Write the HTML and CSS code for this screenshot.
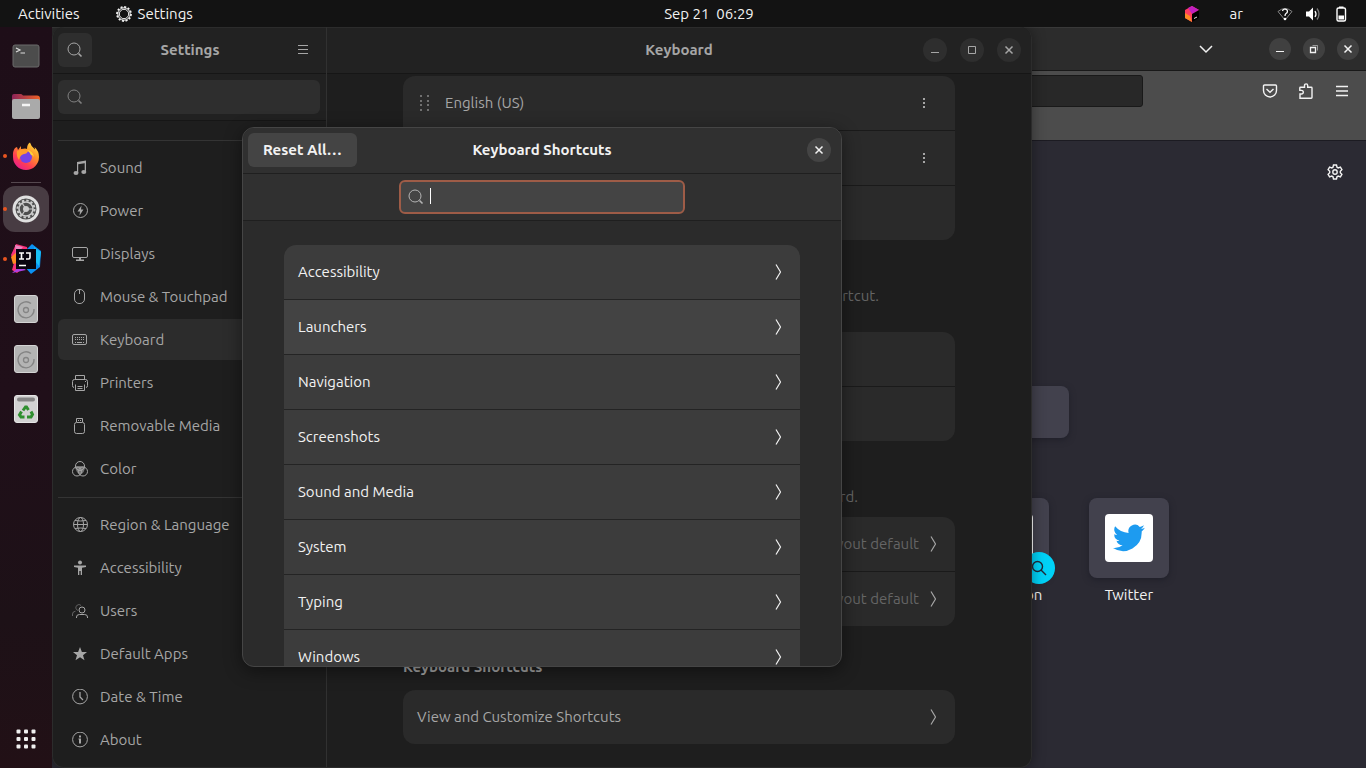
FILE: index.html
```html
<!DOCTYPE html>
<html lang="en">
<head>
<meta charset="utf-8">
<title>Keyboard Shortcuts</title>
<link rel="stylesheet" href="styles.css">
</head>
<body>
<svg class="sprite" aria-hidden="true">
  <symbol id="search" viewBox="0 0 16 16"><g fill="none" stroke="currentColor"><circle cx="7" cy="7" r="6"/><path d="M11.5 11.5l3 3" stroke-width="1.6"/></g></symbol>
  <symbol id="menu" viewBox="0 0 16 16"><path d="M3 3.5h10M3 7.5h10M3 11.5h10" stroke="currentColor" fill="none"/></symbol>
  <symbol id="min" viewBox="0 0 16 16"><path d="M4 10.5h8" stroke="currentColor" fill="none"/></symbol>
  <symbol id="max" viewBox="0 0 16 16"><path d="M4.500 4.500h7v7h-7z" stroke="currentColor" fill="none"/></symbol>
  <symbol id="restore" viewBox="0 0 16 16"><path d="M4.500 6.500h5v5h-5z" stroke="currentColor" fill="none" stroke-width="1.300"/><path d="M6.500 4.500h5v5" stroke="currentColor" opacity=".5" fill="none"/></symbol>
  <symbol id="close" viewBox="0 0 16 16"><path d="M4.500 4.500l7 7M11.500 4.500l-7 7" stroke="currentColor" stroke-width="1.500" fill="none"/></symbol>
  <symbol id="next" viewBox="0 0 16 16"><path d="M6 .5L10.500 8 6 15.500" stroke="currentColor" stroke-width="1.200" fill="none"/></symbol>
  <symbol id="more" viewBox="0 0 16 16"><path d="M7 3h2v2H7zM7 7h2v2H7zM7 11h2v2H7z" fill="currentColor"/></symbol>
  <symbol id="drive" viewBox="0 0 24 28"><rect x=".5" y=".5" width="23" height="27" rx="2.500" fill="#b4b4b4" stroke="#d4d4d4"/><path d="M17 8.500a8 8 0 1 0 3 5.500" fill="none" stroke="#858585" stroke-width="1.300"/><circle cx="12" cy="15" r="2.500" fill="none" stroke="#858585" stroke-width="1.300"/></symbol>
</svg>

<header class="topbar">
  <div class="topbar-left">
    <button class="plain">Activities</button>
    <button class="plain app-menu"><svg class="icon" viewBox="0 0 16 16"><circle cx="8" cy="8" r="7" fill="none" stroke="currentColor" stroke-width="1.800" stroke-dasharray="2 1.660"/><circle cx="8" cy="8" r="6.200" fill="none" stroke="currentColor"/><circle cx="8" cy="8" r="4.700" fill="none" stroke="currentColor"/></svg>Settings</button>
  </div>
  <time class="clock">Sep 21&nbsp; 06:29</time>
  <div class="topbar-right">
    <svg class="icon toolbox" viewBox="0 0 16 16"><path d="M8 0l7 4v3L8 16 1 12V4z" fill="#ff3c61"/><path d="M8 0l7 4-7 4-4-6z" fill="#c21fc0"/><path d="M1 7l5 3 2 6-7-4z" fill="#ff8a24"/><path d="M8 8l7-4v8l-7 4z" fill="#000"/><path d="M10 12.500l3-1.500" stroke="#ddd"/></svg>
    <button class="plain lang">ar</button>
    <button class="plain status">
      <svg class="icon" viewBox="0 0 16 16"><path d="M8 14L1 5.500Q8-.5 15 5.500z" fill="none" stroke="#888"/><path d="M5.500 5a2.500 2.300 0 1 1 3.500 2.500q-1 .7-1 2.500" fill="none" stroke="#fff" stroke-width="1.300"/><circle cx="8" cy="13" r="1.300" fill="#fff"/></svg>
      <svg class="icon" viewBox="0 0 16 16"><path d="M1 5.500h3L8 1.500v13l-4-4H1z" fill="#fff"/><path d="M10 5q2 3 0 6" fill="none" stroke="#fff" stroke-width="1.300"/><path d="M12 2.500q4 5.500 0 11" fill="none" stroke="#777" stroke-width="1.300"/></svg>
      <svg class="icon" viewBox="0 0 16 16"><rect x="4" y="2" width="8.500" height="13" rx="1.500" fill="none" stroke="#fff" stroke-width="1.400"/><path d="M6 .5h4.500V2H6zM5.500 9.500H11v4H5.500z" fill="#fff"/></svg>
    </button>
  </div>
</header>

<div class="desktop">
  <nav class="dock" aria-label="Dock">
    <button class="launcher" aria-label="Terminal"><svg width="28" height="24" viewBox="0 0 28 24"><rect x="1" y="1" width="26" height="22" rx="2" fill="#4c4c4c" stroke="#6b6b6b"/><path d="M4 4l4 2-4 2" fill="none" stroke="#ddd" stroke-width="1.200"/><path d="M8.500 9h4.500" stroke="#ddd"/></svg></button>
    <button class="launcher" aria-label="Files"><svg width="30" height="28" viewBox="0 0 30 28"><defs><linearGradient id="folder"><stop stop-color="#8d2459"/><stop offset="1" stop-color="#ee6126"/></linearGradient></defs><path d="M1 8V4q0-2 2-2h7q1 0 2 1.500h14q3 0 3 3V12H1z" fill="url(#folder)"/><rect x="1" y="7" width="28" height="20" rx="2" fill="#aaa"/><path d="M11 13h8" stroke="#f4f4f4" stroke-width="2.500"/></svg></button>
    <button class="launcher running" aria-label="Firefox"><svg width="28" height="28" viewBox="0 0 28 28"><defs><linearGradient id="fox" x1="1" y1="0" x2="0.300" y2="1"><stop stop-color="#fff04c"/><stop offset=".4" stop-color="#ff9a28"/><stop offset=".75" stop-color="#ff3f52"/><stop offset="1" stop-color="#e8208a"/></linearGradient></defs><path d="M18 .5q1 4 5 7 0-1.500-.500-2.500Q27 9 27 15A13 13 0 0 1 1 15Q.5 9 3 6l2-1 1 3 3-4v3q5-1 6 0 0-5 3-6.500z" fill="url(#fox)"/><circle cx="14" cy="15" r="6" fill="#7542e5"/><path d="M5 9q5-3 11 0-1 3-4 3-4 1-5 6-3-4-2-9z" fill="#ff9b2c"/><path d="M15 8q6 1 7 7-1-2-3-2-1-3-4-5z" fill="#ffd13a"/></svg></button>
    <hr class="dock-line">
    <button class="launcher running active" aria-label="Settings"><svg width="28" height="28" viewBox="0 0 28 28"><circle cx="14" cy="14" r="13.500" fill="#e0e0e0"/><circle cx="14" cy="14" r="10.500" fill="#4e4e4e"/><circle cx="14" cy="14" r="8.500" fill="none" stroke="#ccc" stroke-width="2" stroke-dasharray="2.400 2.050"/><circle cx="14" cy="14" r="7" fill="none" stroke="#ccc" stroke-width="1.600"/><circle cx="14" cy="14" r="3" fill="#ccc"/><path d="M14 14L10 8M14 14h7M14 14l-4 6" stroke="#ccc" stroke-width="1.200"/></svg></button>
    <button class="launcher running" aria-label="IntelliJ IDEA"><svg width="30" height="30" viewBox="0 0 30 30"><path d="M0 11l5-11 11 3 3 15-13 11-5-3 2-7z" fill="#f83179"/><path d="M0 13l7-6 3 11-8 2z" fill="#ff8b22"/><path d="M4 1l8 2-7 8z" fill="#e887c0"/><path d="M16 5l5-5 9 7-1 16-9 7-6-7z" fill="#0a91f3"/><path d="M23 3l7 5-2 14-4-5z" fill="#18bff5"/><path d="M1 29l8-7 6 4z" fill="#ad3fe0"/><path d="M5 5h20v20H5z" fill="#080510"/><path d="M8 9h5M10.500 9v6M8 15h5M15 9h4v4.500q0 1.500-1.500 1.500H15M8 21.500h7" fill="none" stroke="#fff" stroke-width="1.600"/></svg></button>
    <button class="launcher" aria-label="Volume 1"><svg width="24" height="28"><use href="#drive"/></svg></button>
    <button class="launcher" aria-label="Volume 2"><svg width="24" height="28"><use href="#drive"/></svg></button>
    <button class="launcher" aria-label="Trash"><svg width="24" height="28" viewBox="0 0 24 28"><rect x=".5" y=".5" width="23" height="27" rx="2.500" fill="#d2d2d2" stroke="#e6e6e6"/><rect x="3" y="2.500" width="18" height="4" rx="2" fill="#858585"/><g fill="none" stroke="#2f8f2f" stroke-width="3"><path d="M9 15.500l2.500-3.500h1l2 3"/><path d="M17 16.500l1.500 3-1.500 2.500h-4"/><path d="M10.500 22H7l-1.500-2 2-3.500"/></g></svg></button>
    <button class="launcher apps" aria-label="Show Applications"><svg width="20" height="20" viewBox="0 0 20 20" fill="#f0f0f0"><rect x=".5" y=".5" width="4" height="4" rx="1"/><rect x="8" y=".5" width="4" height="4" rx="1"/><rect x="15.500" y=".5" width="4" height="4" rx="1"/><rect x=".5" y="8" width="4" height="4" rx="1"/><rect x="8" y="8" width="4" height="4" rx="1"/><rect x="15.500" y="8" width="4" height="4" rx="1"/><rect x=".5" y="15.500" width="4" height="4" rx="1"/><rect x="8" y="15.500" width="4" height="4" rx="1"/><rect x="15.500" y="15.500" width="4" height="4" rx="1"/></svg></button>
  </nav>

  <main class="workspace">
    <section class="browser" aria-label="Browser">
      <div class="tabbar">
        <button class="plain tabs-menu" aria-label="List all tabs"><svg class="icon" viewBox="0 0 16 16"><path d="M2 5l6 6 6-6" fill="none" stroke="currentColor" stroke-width="1.500"/></svg></button>
        <div class="window-buttons">
          <button class="round" aria-label="Minimize"><svg class="icon"><use href="#min"/></svg></button>
          <button class="round" aria-label="Restore"><svg class="icon"><use href="#restore"/></svg></button>
          <button class="round" aria-label="Close"><svg class="icon"><use href="#close"/></svg></button>
        </div>
      </div>
      <div class="toolbar">
        <input class="address" type="text" aria-label="Address">
        <div class="toolbar-actions">
          <button class="plain" aria-label="Save to Pocket"><svg class="icon" viewBox="0 0 16 16"><g fill="none" stroke="currentColor" stroke-width="1.400"><path d="M2.500 2h11q1 0 1 1v4.500a6.500 6.500 0 0 1-13 0V3q0-1 1-1z"/><path d="M4.500 6L8 9.300 11.500 6"/></g></svg></button>
          <button class="plain" aria-label="Extensions"><svg class="icon" viewBox="0 0 16 16"><path d="M2 15.200V11h1.500a1.800 1.800 0 0 0 0-3.600H1.800V5q0-.7.700-.7h4V2.500a1.600 1.600 0 0 1 3.200 0v1.800h3.500q.8 0 .8.700v9.500q0 .7-.8.700z" fill="none" stroke="currentColor" stroke-width="1.400"/></svg></button>
          <button class="plain" aria-label="Open menu"><svg class="icon" viewBox="0 0 16 16"><path d="M2 3.500h12M2 8h12M2 12.500h12" stroke="currentColor" stroke-width="1.300"/></svg></button>
        </div>
      </div>
      <div class="newtab">
        <button class="plain personalize" aria-label="Personalize new tab"><svg class="icon" viewBox="0 0 16 16"><g fill="none" stroke="currentColor" stroke-width="1.400"><path d="M6.500 1h3l.5 2.200 1.200.7 2.200-.8 1.500 2.600-1.600 1.600v1.400l1.600 1.600-1.500 2.600-2.200-.8-1.200.7-.5 2.200h-3L6 12.800l-1.200-.7-2.200.8-1.500-2.600 1.600-1.600V7.300L1.100 5.700l1.500-2.600 2.200.8L6 3.200z"/><circle cx="8" cy="8" r="2.200"/></g></svg></button>
        <input class="web-search" type="text" aria-label="Search the web">
        <div class="tiles">
          <a class="tile" href="#"><span class="tile-box"><span class="tile-logo"></span><span class="tile-badge"><svg class="icon" viewBox="0 0 16 16"><g fill="none" stroke="currentColor" stroke-width="1.400"><circle cx="6.500" cy="6.500" r="5"/><path d="M10 10l5 5"/></g></svg></span></span>@amazon</a>
          <a class="tile" href="#"><span class="tile-box"><span class="tile-logo"><svg width="32" height="28" viewBox="0 0 24 20"><path d="M23.900 2.400q-1.300.6-2.800.8 1.500-1 2.100-2.700-1.400.8-3.100 1.200A4.900 4.900 0 0 0 11.700 6.200Q5.500 5.900 1.600 1.200a4.900 4.900 0 0 0 1.500 6.500q-1.200 0-2.200-.6a4.900 4.900 0 0 0 3.900 4.900q-1.100.3-2.200.1a4.900 4.900 0 0 0 4.600 3.400A9.900 9.900 0 0 1 0 17.500 13.900 13.900 0 0 0 21.500 5.100q1.500-1.100 2.400-2.700z" fill="#1d9bf0"/></svg></span></span>Twitter</a>
        </div>
      </div>
    </section>

    <section class="settings" aria-label="Settings">
      <aside class="sidebar">
        <div class="headerbar">
          <button class="tool" aria-label="Search"><svg class="icon"><use href="#search"/></svg></button>
          <h1 class="title">Settings</h1>
          <button class="plain side-menu" aria-label="Menu"><svg class="icon"><use href="#menu"/></svg></button>
        </div>
        <div class="side-search"><label class="field"><svg class="icon"><use href="#search"/></svg><input type="text" aria-label="Search settings"></label></div>
        <nav class="panels">
          <hr>
          <a href="#"><svg class="icon" viewBox="0 0 16 16"><path d="M5 2L14 .5V3L6.200 4.300V13H5z" fill="currentColor"/><path d="M12.700 2H14v10h-1.300z" fill="currentColor"/><ellipse cx="4" cy="13" rx="2.500" ry="2" fill="currentColor"/><ellipse cx="11.800" cy="12" rx="2.500" ry="2" fill="currentColor"/></svg>Sound</a>
          <a href="#"><svg class="icon" viewBox="0 0 16 16"><circle cx="8.500" cy="7.500" r="7" fill="none" stroke="currentColor"/><path d="M9.500 2.500L5.500 8.500H8l-.5 4 4-6H9z" fill="currentColor"/></svg>Power</a>
          <a href="#"><svg class="icon" viewBox="0 0 16 16"><rect x=".5" y="1.500" width="15" height="10" rx="1.500" fill="none" stroke="currentColor"/><path d="M7 12h2v1.500h3V15H4v-1.500h3z" fill="currentColor"/></svg>Displays</a>
          <a href="#"><svg class="icon" viewBox="0 0 16 16"><rect x="2.500" y=".5" width="10" height="14" rx="4.500" fill="none" stroke="currentColor"/><path d="M7.500 1v4" stroke="currentColor"/></svg>Mouse &amp; Touchpad</a>
          <a href="#" class="selected"><svg class="icon" viewBox="0 0 16 16"><rect x=".5" y="2.500" width="14" height="10" rx="1.500" fill="none" stroke="currentColor"/><path d="M3 5.500h10M3 7.500h10" stroke="currentColor" stroke-dasharray="1 1"/><path d="M3 10.500h1M5 10.500h5M11 10.500h1" stroke="currentColor"/></svg>Keyboard</a>
          <a href="#"><svg class="icon" viewBox="0 0 16 16"><g fill="none" stroke="currentColor"><path d="M3.500 4V.5h9V4M2 12.500q-1.500 0-1.500-2V6.500q0-2 2-2h11q2 0 2 2v4q0 2-1.500 2"/><path d="M3.500 9.500v6h9v-6M5.500 11.500h5M5.500 13.500h5" /><path d="M13 6.500h1"/></g></svg>Printers</a>
          <a href="#"><svg class="icon" viewBox="0 0 16 16"><g fill="none" stroke="currentColor"><rect x="2.500" y="4.500" width="10" height="11" rx="2"/><path d="M4.500 4V.5h6V4M6 2.500h1M8 2.500h1"/></g></svg>Removable Media</a>
          <a href="#"><svg class="icon" viewBox="0 0 16 16"><path d="M3 6q5-2 10 0 0 5-5 8-4-3-5-8z" fill="currentColor" opacity=".65"/><g fill="none" stroke="currentColor"><circle cx="8" cy="5" r="4.500"/><circle cx="5" cy="10.500" r="4.500"/><circle cx="11" cy="10.500" r="4.500"/></g></svg>Color</a>
          <hr>
          <a href="#"><svg class="icon" viewBox="0 0 16 16"><g fill="none" stroke="currentColor"><circle cx="8.500" cy="7.500" r="7"/><ellipse cx="8.500" cy="7.500" rx="3" ry="7"/><path d="M1.500 7.500h14M3 3.500q5.500 1 11 0M3 11.500q5.500-1 11 0"/></g></svg>Region &amp; Language</a>
          <a href="#"><svg class="icon" viewBox="0 0 16 16"><circle cx="8" cy="2.500" r="2" fill="currentColor"/><path d="M2 5.500h12V7l-4 .8V15H8.700v-4H7.300v4H6V7.800L2 7z" fill="currentColor"/></svg>Accessibility</a>
          <a href="#"><svg class="icon" viewBox="0 0 16 16"><g fill="none" stroke="currentColor"><g opacity=".5"><path d="M6 7.500a3 3 0 1 1 3-5M.5 13V11q0-2.500 3-2.800"/></g><circle cx="10" cy="7" r="3"/><path d="M4.500 15v-1q0-2.500 3-2.500h5q3 0 3 2.500v1"/></g></svg>Users</a>
          <a href="#"><svg class="icon" viewBox="0 0 16 16"><path d="M8 1l1.900 5H15l-4 3.200 1.500 5L8 11.200l-4.500 3 1.500-5L1 6h5.100z" fill="currentColor"/></svg>Default Apps</a>
          <a href="#"><svg class="icon" viewBox="0 0 16 16"><g fill="none" stroke="currentColor"><circle cx="8" cy="7.500" r="7.400"/><path d="M8 3v5l3 3" stroke-width="1.300"/></g></svg>Date &amp; Time</a>
          <a href="#"><svg class="icon" viewBox="0 0 16 16"><circle cx="8" cy="7.500" r="7.400" fill="none" stroke="currentColor"/><path d="M7 3.500h2v2H7zM6.500 6.500H9v5H7v-4h-.5z" fill="currentColor"/></svg>About</a>
        </nav>
      </aside>

      <div class="panel">
        <div class="headerbar">
          <h2 class="title">Keyboard</h2>
          <div class="window-buttons">
            <button class="round" aria-label="Minimize"><svg class="icon"><use href="#min"/></svg></button>
            <button class="round" aria-label="Maximize"><svg class="icon"><use href="#max"/></svg></button>
            <button class="round" aria-label="Close"><svg class="icon"><use href="#close"/></svg></button>
          </div>
        </div>
        <div class="panel-body">
          <div class="card sources">
            <div class="row"><svg class="icon grip" viewBox="0 0 16 16" fill="currentColor"><path d="M4 0h2v2H4zM11 0h2v2h-2zM4 5h2v2H4zM11 5h2v2h-2zM4 9h2v2H4zM11 9h2v2h-2zM4 14h2v2H4zM11 14h2v2h-2z"/></svg><span class="grow">English (US)</span><button class="plain" aria-label="More"><svg class="icon"><use href="#more"/></svg></button></div>
            <div class="row"><span class="grow"></span><button class="plain" aria-label="More"><svg class="icon"><use href="#more"/></svg></button></div>
            <div class="row"></div>
          </div>
          <p class="caption switching">keyboard shortcut.</p>
          <div class="card"><div class="row"></div><div class="row"></div></div>
          <p class="caption entry">using the keyboard.</p>
          <div class="card">
            <button class="row"><span class="grow value">Layout default</span><svg class="icon"><use href="#next"/></svg></button>
            <button class="row"><span class="grow value">Layout default</span><svg class="icon"><use href="#next"/></svg></button>
          </div>
          <h3 class="group-title">Keyboard Shortcuts</h3>
          <div class="card"><button class="row"><span class="grow">View and Customize Shortcuts</span><svg class="icon"><use href="#next"/></svg></button></div>
        </div>
      </div>

      <div class="overlay">
        <div class="dialog" role="dialog" aria-labelledby="dialog-title">
          <div class="dialog-header">
            <button class="reset">Reset All…</button>
            <h2 class="title" id="dialog-title">Keyboard Shortcuts</h2>
            <button class="round" aria-label="Close"><svg class="icon"><use href="#close"/></svg></button>
          </div>
          <div class="dialog-search"><label class="field"><svg class="icon"><use href="#search"/></svg><span class="caret"></span><input type="text" aria-label="Search shortcuts"></label></div>
          <div class="dialog-body">
            <div class="card">
              <button class="row"><span class="grow">Accessibility</span><svg class="icon"><use href="#next"/></svg></button>
              <button class="row hover"><span class="grow">Launchers</span><svg class="icon"><use href="#next"/></svg></button>
              <button class="row"><span class="grow">Navigation</span><svg class="icon"><use href="#next"/></svg></button>
              <button class="row"><span class="grow">Screenshots</span><svg class="icon"><use href="#next"/></svg></button>
              <button class="row"><span class="grow">Sound and Media</span><svg class="icon"><use href="#next"/></svg></button>
              <button class="row"><span class="grow">System</span><svg class="icon"><use href="#next"/></svg></button>
              <button class="row"><span class="grow">Typing</span><svg class="icon"><use href="#next"/></svg></button>
              <button class="row"><span class="grow">Windows</span><svg class="icon"><use href="#next"/></svg></button>
            </div>
          </div>
        </div>
      </div>
    </section>
  </main>
</div>
</body>
</html>
```

FILE: styles.css
```css
* { box-sizing: border-box; }

body {
  margin: 0;
  height: 100vh;
  display: flex;
  flex-direction: column;
  overflow: hidden;
  background: #1e0e16;
  color: #f2f2f2;
  font: 15px/20px Ubuntu, "Noto Sans", sans-serif;
}

button, input { font: inherit; color: inherit; border: 0; background: none; padding: 0; margin: 0; }
input:focus { outline: none; }
a { color: inherit; text-decoration: none; }
h1, h2, h3, p { margin: 0; }
hr { border: 0; margin: 0; height: 1px; }
.sprite { position: absolute; width: 0; height: 0; }
.icon { width: 16px; height: 16px; flex: none; display: block; }
.plain { display: flex; align-items: center; }

/* Top bar */
.topbar {
  display: grid;
  grid-template-columns: 52px 1fr auto 1fr;
  align-items: center;
  height: 27px;
  flex: none;
  background: #131313;
}
.topbar-left { grid-column: 1 / 3; display: flex; gap: 36px; padding-left: 18px; }
.app-menu { gap: 6px; }
.topbar-right { display: flex; justify-content: flex-end; align-items: center; padding-right: 17px; }
.lang { margin: 0 34px 0 30px; }
.status { gap: 12px; }

/* Dock */
.desktop { flex: 1; min-height: 0; display: flex; }
.dock {
  width: 52px;
  flex: none;
  display: flex;
  flex-direction: column;
  align-items: center;
  gap: 4px;
  padding: 6px 0;
  background: linear-gradient(#1e0e18, #200f19 50%, #1d1117 80%, #221016);
}
.launcher {
  position: relative;
  width: 46px;
  height: 46px;
  flex: none;
  display: flex;
  align-items: center;
  justify-content: center;
  border-radius: 12px;
}
.launcher.active { background: #483c43; }
.launcher.running::before {
  content: "";
  position: absolute;
  left: 0;
  width: 4px;
  height: 4px;
  border-radius: 50%;
  background: #e95420;
}
.dock-line { width: 30px; background: #55484f; margin: -1px 0; }
.apps { margin-top: auto; }

.workspace { position: relative; flex: 1; min-width: 0; overflow: hidden; }
.window-buttons { display: flex; gap: 13px; }
.round {
  width: 24px;
  height: 24px;
  flex: none;
  display: flex;
  align-items: center;
  justify-content: center;
  border-radius: 50%;
  background: #2e2e2e;
}

/* Browser window */
.browser { position: absolute; inset: 0; display: flex; flex-direction: column; background: #2b2a33; }
.tabbar {
  display: flex;
  align-items: center;
  justify-content: flex-end;
  gap: 55px;
  height: 44px;
  padding-right: 7px;
  background: #2c2c2c;
  border-top: 1px solid #393939;
  border-bottom: 1px solid #191919;
}
.tabbar .window-buttons { gap: 12px; }
.tabbar .round { width: 22px; height: 22px; background: #404040; }
.toolbar {
  display: flex;
  align-items: flex-start;
  height: 70px;
  padding: 4px 16px 0 200px;
  background: #4c4c4c;
  border-bottom: 1px solid #1c1b22;
}
.address { flex: 1; height: 32px; background: #282828; border: 1px solid #191919; border-radius: 3px; margin-right: 119px; }
.toolbar-actions { display: flex; gap: 20px; padding-top: 8px; }
.newtab { flex: 1; display: flex; flex-direction: column; align-items: center; }
.personalize { align-self: flex-end; margin: 23px 23px 206px 0; }
.web-search { width: 720px; height: 52px; flex: none; border-radius: 8px; background: #42414d; box-shadow: 0 2px 6px #20202a; }
.tiles { width: 920px; display: flex; justify-content: flex-end; gap: 40px; margin-top: 60px; }
.tile { width: 80px; display: flex; flex-direction: column; align-items: center; gap: 7px; }
.tile-box {
  position: relative;
  width: 80px;
  height: 80px;
  display: flex;
  align-items: center;
  justify-content: center;
  border-radius: 8px;
  background: #42414d;
  box-shadow: 0 2px 6px #20202a;
}
.tile-logo { width: 48px; height: 48px; display: flex; align-items: center; justify-content: center; border-radius: 4px; background: #fff; }
.tile-badge {
  position: absolute;
  right: -6px;
  bottom: -6px;
  width: 32px;
  height: 32px;
  display: flex;
  align-items: center;
  justify-content: center;
  border-radius: 50%;
  background: #00d2f7;
  color: #202a3a;
}

/* Settings window */
.settings {
  position: absolute;
  inset: 0 334px 0 0;
  display: flex;
  overflow: hidden;
  border: 1px solid #2c2c2c;
  border-top: 0;
  border-radius: 12px;
  background: #1e1e1e;
  color: #a6a6a6;
  box-shadow: 0 0 14px rgb(0 0 0 / 40%);
}
.headerbar {
  position: relative;
  display: flex;
  align-items: center;
  height: 47px;
  flex: none;
  padding: 0 8px 0 5px;
  background: #222;
  border-bottom: 1px solid #161616;
  box-shadow: inset 0 1px #2c2c2c;
}
.title { flex: 1; text-align: center; font-size: 15px; font-weight: 600; }
.sidebar { width: 274px; flex: none; display: flex; flex-direction: column; border-right: 1px solid #313131; }
.tool { width: 34px; height: 34px; display: flex; align-items: center; justify-content: center; border-radius: 6px; background: #2e2e2e; }
.side-menu { padding: 0 7px; }
.side-search { padding: 6px 6px 6px 5px; background: #212121; border-bottom: 1px solid #161616; }
.field { position: relative; display: flex; align-items: center; gap: 8px; height: 34px; padding: 0 9px; border-radius: 6px; background: #2e2e2e; }
.field input { flex: 1; min-width: 0; }
.side-search .icon { color: #808080; }
.panels { flex: 1; min-height: 0; overflow: hidden; display: flex; flex-direction: column; gap: 2px; padding: 13px 6px 0 5px; }
.panels hr { flex: none; margin: 6px 0 4px; background: #343434; }
.panels a { display: flex; align-items: center; gap: 12px; height: 41px; flex: none; padding: 0 14px; border-radius: 6px; }
.panels .selected { background: #2c2c2c; }

.panel { flex: 1; min-width: 0; display: flex; flex-direction: column; }
.panel .headerbar { padding: 0 10px; }
.panel .window-buttons { position: absolute; right: 10px; }
.panel-body { width: 552px; align-self: center; padding-top: 2px; }
.card { display: flex; flex-direction: column; border-radius: 12px; overflow: hidden; background: #2a2a2a; }
.row { display: flex; align-items: center; height: 54px; flex: none; padding: 0 14px; text-align: left; }
.row + .row { height: 55px; border-top: 1px solid #1a1a1a; }
.grow { flex: 1; }
.sources .row { gap: 13px; padding: 0 23px 0 13px; }
.grip { color: #707070; }
.caption { color: #656565; text-align: right; }
.switching { padding: 46px 76px 26px 0; }
.entry { padding: 46px 97px 10px 0; }
.value { color: #656565; text-align: right; margin-right: 6px; }
.group-title { font-size: 15px; font-weight: 600; padding: 31px 0 13px; }

/* Shortcuts dialog */
.overlay { position: absolute; inset: 0; display: flex; align-items: center; justify-content: center; }
.dialog {
  width: 600px;
  height: 540px;
  display: flex;
  flex-direction: column;
  overflow: hidden;
  border: 1px solid #454545;
  border-radius: 12px;
  background: #2b2b2b;
  color: #f2f2f2;
  box-shadow: 0 4px 18px rgb(0 0 0 / 45%);
}
.dialog-header {
  display: grid;
  grid-template-columns: 1fr auto 1fr;
  align-items: center;
  height: 46px;
  flex: none;
  padding: 0 5px 1px;
  background: #303030;
  border-bottom: 1px solid #1f1f1f;
}
.reset { justify-self: start; height: 34px; padding: 0 15px; border-radius: 6px; background: #444; font-weight: 600; }
.dialog .round { justify-self: end; margin-right: 5px; background: #444; }
.dialog-search { padding: 6px 0; background: #303030; border-bottom: 1px solid #1f1f1f; }
.dialog-search .field { width: 286px; margin: 0 auto; padding: 0 7px; background: #444; border: 2px solid #9e5c47; }
.dialog-search .icon { color: #b4b4b4; }
.caret { position: absolute; left: 29px; top: 6px; width: 1px; height: 16px; background: #fff; }
.dialog-body { flex: 1; min-height: 0; overflow: hidden; padding: 24px 41px 0; }
.dialog .card { background: #3c3c3c; }
.dialog .row + .row { border-color: #242424; }
.dialog .hover { background: #434343; }
```
